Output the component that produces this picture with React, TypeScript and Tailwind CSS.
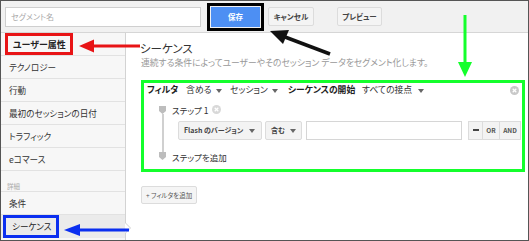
import React from "react";

const Caret = () => (
  <svg width="6" height="4" viewBox="0 0 6 4" className="inline-block">
    <path d="M0 0 L6 0 L3 4 Z" fill="#666" />
  </svg>
);

const CloseCircle = ({ c = "#c8c8c8" }: { c?: string }) => (
  <svg width="9" height="9" viewBox="0 0 10 10">
    <circle cx="5" cy="5" r="5" fill={c} />
    <path d="M3 3 L7 7 M7 3 L3 7" stroke="#fff" strokeWidth="1.4" />
  </svg>
);

const Marker = () => (
  <svg width="7" height="8" viewBox="0 0 7 8">
    <path d="M0 0 H7 V5 L3.5 8 L0 5 Z" fill="#bdbdbd" />
  </svg>
);

const SideItem = ({ children }: { children: React.ReactNode }) => (
  <div className="h-[23px] border-b border-[#e2e2e2] flex items-center pl-[8px] text-[8.6px] text-[#333] whitespace-nowrap">
    {children}
  </div>
);

export default function App() {
  return (
    <div className="relative w-[529px] h-[241px] border border-[#555] bg-white overflow-hidden font-['Noto_Sans_CJK_JP',sans-serif] [font-feature-settings:'palt'] leading-none">
      {/* header */}
      <div className="h-[32px] bg-[#f1f1f1] border-b border-[#d6d6d6] flex items-center pl-[4px]">
        <div className="w-[196px] h-[20px] bg-white border border-[#cfcfcf] flex items-center pl-[5px] text-[8px] text-[#aaa]">
          セグメント名
        </div>
        <div className="ml-[6px] w-[57px] h-[28px] border-[3px] border-black p-[1px]">
          <div className="w-full h-full bg-[#4d8ff3] flex items-center justify-center text-white text-[7.5px] font-bold">
            保存
          </div>
        </div>
        <div className="ml-[4px] w-[46px] h-[19px] bg-[#f4f4f4] border border-[#dcdcdc] rounded-[2px] flex items-center justify-center text-[7.5px] font-bold text-[#444]">
          キャンセル
        </div>
        <div className="ml-[23px] w-[45px] h-[19px] bg-[#f4f4f4] border border-[#dcdcdc] rounded-[2px] flex items-center justify-center text-[7.5px] font-bold text-[#444]">
          プレビュー
        </div>
      </div>

      <div className="flex h-[207px]">
        {/* sidebar */}
        <div className="relative w-[125px] h-full bg-[#f7f7f7] border-r border-[#d3d3d3] flex flex-col">
          <div className="h-[23px] border-b border-[#e2e2e2] flex items-stretch pl-[4px]">
            <div className="w-[68px] border-[3px] border-[#e81416] flex items-center pl-[5px] text-[9px] font-bold text-[#222] whitespace-nowrap">
              ユーザー属性
            </div>
          </div>
          <SideItem>テクノロジー</SideItem>
          <SideItem>行動</SideItem>
          <SideItem>最初のセッションの日付</SideItem>
          <SideItem>トラフィック</SideItem>
          <SideItem>eコマース</SideItem>
          <div className="h-[21px] border-b border-[#e2e2e2] flex items-end pb-[2px] pl-[6px] text-[6.5px] text-[#aaa]">
            詳細
          </div>
          <SideItem>条件</SideItem>
          <div className="h-[23px] bg-[#ebebeb] flex items-stretch pl-[2px]">
            <div className="w-[56px] border-[3px] border-[#0b2ff0] flex items-center pl-[6px] text-[8.6px] text-[#222] whitespace-nowrap">
              シーケンス
            </div>
          </div>
        </div>

        {/* main */}
        <div className="flex-1 pl-[15px] pr-[3px] pt-[8px]">
          <div className="text-[11.5px] text-[#333] leading-[15px] -ml-[1px]">シーケンス</div>
          <div className="mt-[3px] text-[8.8px] text-[#999] whitespace-nowrap">
            連続する条件によってユーザーやそのセッション データをセグメント化します。
          </div>

          <div className="mt-[12px] h-[92px] border-[3px] border-[#14ff2c] flex flex-col">
            <div className="h-[16px] flex items-center pl-[3px] pr-[3px] text-[8.8px] text-[#333] whitespace-nowrap">
              <span className="w-[39px] font-bold text-[#222]">フィルタ</span>
              <span className="w-[30px]">含める</span>
              <span className="w-[14px]"><Caret /></span>
              <span className="w-[42px]">セッション</span>
              <span className="w-[16px]"><Caret /></span>
              <span className="w-[74px] font-bold text-[#222]">シーケンスの開始</span>
              <span className="w-[56px]">すべての接点</span>
              <span><Caret /></span>
              <span className="ml-auto"><CloseCircle /></span>
            </div>

            <div className="flex pl-[15px] mt-[4px]">
              <div className="w-[7px] flex flex-col items-center pt-[3px] pb-[4px]">
                <Marker />
                <div className="w-[2px] flex-1 bg-[#d0d0d0]" />
                <Marker />
              </div>
              <div className="ml-[6px] flex-1 flex flex-col">
                <div className="h-[14px] flex items-center text-[8.5px] text-[#333]">
                  ステップ 1
                  <span className="ml-[3px]"><CloseCircle c="#d8d8d8" /></span>
                </div>
                <div className="mt-[4px] h-[19px] flex items-stretch pl-[6px]">
                  <div className="w-[84px] bg-[#f3f3f3] border border-[#dcdcdc] rounded-[2px] flex items-center pl-[5px] pr-[6px] text-[7px] font-bold text-[#444] whitespace-nowrap">
                    Flash のバージョン
                    <span className="ml-auto"><Caret /></span>
                  </div>
                  <div className="ml-[3px] w-[37px] bg-[#f3f3f3] border border-[#dcdcdc] rounded-[2px] flex items-center pl-[5px] pr-[5px] text-[7px] font-bold text-[#444]">
                    含む
                    <span className="ml-auto"><Caret /></span>
                  </div>
                  <div className="ml-[4px] w-[156px] bg-white border border-[#d6d6d6]" />
                  <div className="ml-[6px] flex items-stretch text-[6.5px] font-bold text-[#555]">
                    <div className="w-[15px] bg-[#f3f3f3] border border-[#dcdcdc] flex items-center justify-center">
                      <div className="w-[6px] h-[2px] bg-[#444]" />
                    </div>
                    <div className="w-[17px] bg-[#f3f3f3] border-y border-r border-[#dcdcdc] flex items-center justify-center">OR</div>
                    <div className="w-[21px] bg-[#f3f3f3] border-y border-r border-[#dcdcdc] flex items-center justify-center">AND</div>
                  </div>
                </div>
                <div className="mt-[10px] h-[14px] flex items-center text-[8.5px] text-[#333]">
                  ステップを追加
                </div>
              </div>
            </div>
          </div>

          <div className="mt-[14px] w-[56px] h-[18px] bg-[#f5f5f5] border border-[#dcdcdc] rounded-[2px] flex items-center pl-[4px] text-[6.5px] text-[#555] whitespace-nowrap">
            + フィルタを追加
          </div>
        </div>
      </div>

      {/* selection notch */}
      <div className="absolute left-[124px] top-[221px] w-0 h-0 border-y-[6px] border-y-transparent border-l-[6px] border-l-[#cfcfcf]" />
      <div className="absolute left-[124px] top-[222px] w-0 h-0 border-y-[5px] border-y-transparent border-l-[5px] border-l-white" />

      {/* annotation arrows */}
      <svg className="absolute left-0 top-0 pointer-events-none" width="529" height="241" viewBox="-1 -1 529 241">
        {/* red */}
        <line x1="90" y1="44" x2="138" y2="44" stroke="#e81416" strokeWidth="3" />
        <polygon points="77,44 92,37.5 92,50.5" fill="#e81416" />
        {/* blue */}
        <line x1="76" y1="228" x2="127" y2="228" stroke="#0b2ff0" strokeWidth="3" />
        <polygon points="62,228 78,222 78,234" fill="#0b2ff0" />
        {/* black */}
        <line x1="328" y1="52" x2="283" y2="35" stroke="#111" strokeWidth="3.5" />
        <polygon points="268,29 287,28 281,42" fill="#111" />
        {/* green */}
        <line x1="463" y1="13" x2="463" y2="62" stroke="#14ff2c" strokeWidth="3" />
        <polygon points="456,60 470,60 463,75" fill="#14ff2c" />
      </svg>
    </div>
  );
}
